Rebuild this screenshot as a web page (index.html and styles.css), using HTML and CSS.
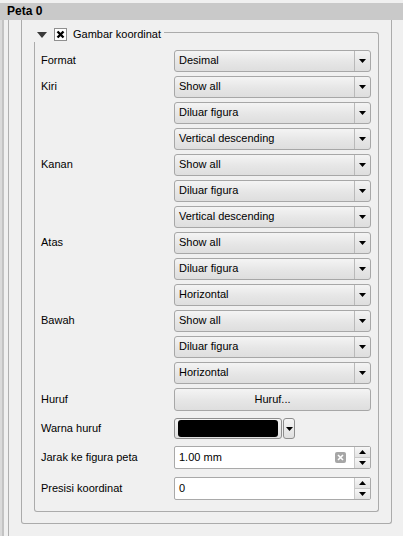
FILE: index.html
```html
<!DOCTYPE html>
<html>
<head>
<meta charset="utf-8">
<link rel="stylesheet" href="styles.css">
</head>
<body>
<div class="page">
  <div class="header">Peta 0</div>
  <div class="scroll">
    <div class="scroll-inner">
      <div class="frame">
        <div class="outer">
          <div class="group">
            <div class="ghead">
              <div class="gtitle">
                <svg class="collapse" width="10" height="6" viewBox="0 0 10 6"><polygon points="0,0 10,0 5,6" fill="#3a3a3a"/></svg>
                <svg class="check" width="13" height="13" viewBox="0 0 13 13"><rect x="0.5" y="0.5" width="12" height="12" fill="#fff" stroke="#8f8f8f"/><path d="M3.5 3.5 L9.5 9.5 M9.5 3.5 L3.5 9.5" stroke="#000" stroke-width="2.4"/></svg>
                <span class="gtext">Gambar koordinat</span>
              </div>
              <div class="gline"></div>
            </div>
            <div class="gbody">
              <div class="row"><span class="label">Format</span><div class="combo"><span class="ctext">Desimal</span><span class="cbtn"><svg width="7" height="4" viewBox="0 0 7 4"><polygon points="0,0 7,0 3.5,4" fill="#000"/></svg></span></div></div>
              <div class="row"><span class="label">Kiri</span><div class="combo"><span class="ctext">Show all</span><span class="cbtn"><svg width="7" height="4" viewBox="0 0 7 4"><polygon points="0,0 7,0 3.5,4" fill="#000"/></svg></span></div></div>
              <div class="row"><span class="label"></span><div class="combo"><span class="ctext">Diluar figura</span><span class="cbtn"><svg width="7" height="4" viewBox="0 0 7 4"><polygon points="0,0 7,0 3.5,4" fill="#000"/></svg></span></div></div>
              <div class="row"><span class="label"></span><div class="combo"><span class="ctext">Vertical descending</span><span class="cbtn"><svg width="7" height="4" viewBox="0 0 7 4"><polygon points="0,0 7,0 3.5,4" fill="#000"/></svg></span></div></div>
              <div class="row"><span class="label">Kanan</span><div class="combo"><span class="ctext">Show all</span><span class="cbtn"><svg width="7" height="4" viewBox="0 0 7 4"><polygon points="0,0 7,0 3.5,4" fill="#000"/></svg></span></div></div>
              <div class="row"><span class="label"></span><div class="combo"><span class="ctext">Diluar figura</span><span class="cbtn"><svg width="7" height="4" viewBox="0 0 7 4"><polygon points="0,0 7,0 3.5,4" fill="#000"/></svg></span></div></div>
              <div class="row"><span class="label"></span><div class="combo"><span class="ctext">Vertical descending</span><span class="cbtn"><svg width="7" height="4" viewBox="0 0 7 4"><polygon points="0,0 7,0 3.5,4" fill="#000"/></svg></span></div></div>
              <div class="row"><span class="label">Atas</span><div class="combo"><span class="ctext">Show all</span><span class="cbtn"><svg width="7" height="4" viewBox="0 0 7 4"><polygon points="0,0 7,0 3.5,4" fill="#000"/></svg></span></div></div>
              <div class="row"><span class="label"></span><div class="combo"><span class="ctext">Diluar figura</span><span class="cbtn"><svg width="7" height="4" viewBox="0 0 7 4"><polygon points="0,0 7,0 3.5,4" fill="#000"/></svg></span></div></div>
              <div class="row"><span class="label"></span><div class="combo"><span class="ctext">Horizontal</span><span class="cbtn"><svg width="7" height="4" viewBox="0 0 7 4"><polygon points="0,0 7,0 3.5,4" fill="#000"/></svg></span></div></div>
              <div class="row"><span class="label">Bawah</span><div class="combo"><span class="ctext">Show all</span><span class="cbtn"><svg width="7" height="4" viewBox="0 0 7 4"><polygon points="0,0 7,0 3.5,4" fill="#000"/></svg></span></div></div>
              <div class="row"><span class="label"></span><div class="combo"><span class="ctext">Diluar figura</span><span class="cbtn"><svg width="7" height="4" viewBox="0 0 7 4"><polygon points="0,0 7,0 3.5,4" fill="#000"/></svg></span></div></div>
              <div class="row"><span class="label"></span><div class="combo"><span class="ctext">Horizontal</span><span class="cbtn"><svg width="7" height="4" viewBox="0 0 7 4"><polygon points="0,0 7,0 3.5,4" fill="#000"/></svg></span></div></div>
              <div class="row row-btn"><span class="label">Huruf</span><div class="button">Huruf...</div></div>
              <div class="row row-color"><span class="label">Warna huruf</span>
                <div class="colorbtn"><div class="swatch"></div></div>
                <div class="colordrop"><svg width="7" height="4" viewBox="0 0 7 4"><polygon points="0,0 7,0 3.5,4" fill="#000"/></svg></div>
              </div>
              <div class="row row-spin"><span class="label">Jarak ke figura peta</span>
                <div class="spin"><span class="stext">1.00 mm</span>
                  <svg class="clear" width="11" height="11" viewBox="0 0 11 11"><rect x="0" y="0" width="11" height="11" rx="2" fill="#a6a6a6"/><path d="M3 3 L8 8 M8 3 L3 8" stroke="#fff" stroke-width="1.6"/></svg>
                  <span class="sbtns"><span class="sb"><svg width="7" height="4" viewBox="0 0 7 4"><polygon points="0,4 7,4 3.5,0" fill="#000"/></svg></span><span class="sb"><svg width="7" height="4" viewBox="0 0 7 4"><polygon points="0,0 7,0 3.5,4" fill="#000"/></svg></span></span>
                </div>
              </div>
              <div class="row row-spin last"><span class="label">Presisi koordinat</span>
                <div class="spin"><span class="stext">0</span>
                  <span class="sbtns"><span class="sb"><svg width="7" height="4" viewBox="0 0 7 4"><polygon points="0,4 7,4 3.5,0" fill="#000"/></svg></span><span class="sb"><svg width="7" height="4" viewBox="0 0 7 4"><polygon points="0,0 7,0 3.5,4" fill="#000"/></svg></span></span>
                </div>
              </div>
            </div>
          </div>
        </div>
      </div>
    </div>
  </div>
</div>
</body>
</html>
```

FILE: styles.css
```css
html, body {
  margin: 0;
  padding: 0;
  background: #f0f0f0;
}
body {
  font-family: "Liberation Sans", Arial, sans-serif;
  font-size: 11px;
  color: #000;
}
.page {
  width: 403px;
  height: 536px;
  box-sizing: border-box;
  padding-top: 3px;
  display: flex;
  flex-direction: column;
  overflow: hidden;
}
.header {
  flex: none;
  height: 17px;
  line-height: 17px;
  background: #c9c9c9;
  font-weight: bold;
  font-size: 12px;
  padding-left: 7px;
}
.scroll {
  flex: 1;
  display: flex;
  border-left: 2px solid #dadada;
}
.scroll-inner {
  flex: 1;
  display: flex;
  border-left: 2px solid #c3c3c3;
  padding-left: 4px;
}
.frame {
  flex: 1;
  display: flex;
  align-items: flex-start;
  border-left: 1px solid #b0b0b0;
  padding-left: 12px;
}
.outer {
  width: 371px;
  box-sizing: border-box;
  border: 1px solid #ababab;
  border-top: none;
  border-radius: 0 0 3px 3px;
  padding: 0 12px 11px 12px;
}
.ghead {
  display: flex;
  height: 22px;
}
.gtitle {
  display: flex;
  align-items: center;
  padding: 8px 3px 1px 3px;
}
.collapse {
  margin-right: 7px;
}
.check {
  margin-right: 6px;
}
.gtext {
  line-height: 13px;
}
.gline {
  flex: 1;
  margin-top: 12px;
  border-top: 1px solid #ababab;
  border-right: 1px solid #ababab;
  border-top-right-radius: 3px;
}
.gbody {
  border: 1px solid #ababab;
  border-top: none;
  border-radius: 0 0 3px 3px;
  padding: 8px 7px 11px 6px;
}
.row {
  display: flex;
  align-items: center;
  height: 22px;
  margin-top: 4px;
}
.row:first-child {
  margin-top: 0;
}
.row-btn {
  height: 23px;
}
.row-color {
  height: 27px;
}
.row-spin {
  height: 23px;
}
.row-spin.last {
  margin-top: 8px;
}
.label {
  width: 133px;
  flex: none;
  padding-bottom: 2px;
}
.combo {
  width: 197px;
  height: 22px;
  box-sizing: border-box;
  border: 1px solid #a7a7a7;
  border-radius: 3px;
  background: linear-gradient(#f4f4f4, #e6e6e6 55%, #dedede);
  display: flex;
}
.ctext {
  flex: 1;
  padding-left: 4px;
  line-height: 19px;
}
.cbtn {
  width: 16px;
  box-sizing: border-box;
  border-left: 1px solid #b9b9b9;
  display: flex;
  align-items: center;
  justify-content: center;
}
.button {
  width: 197px;
  height: 23px;
  box-sizing: border-box;
  border: 1px solid #a7a7a7;
  border-radius: 3px;
  background: linear-gradient(#f4f4f4, #e6e6e6 55%, #dedede);
  text-align: center;
  line-height: 20px;
}
.colorbtn {
  width: 108px;
  height: 21px;
  box-sizing: border-box;
  border: 1px solid #8e8e8e;
  border-radius: 3px;
  background: linear-gradient(#f5f5f5, #e0e0e0);
  padding: 1px 3px;
  display: flex;
}
.swatch {
  flex: 1;
  background: #000;
  border-radius: 3px;
}
.colordrop {
  width: 12px;
  height: 21px;
  box-sizing: border-box;
  margin-left: 1px;
  border: 1px solid #8e8e8e;
  border-radius: 3px;
  background: linear-gradient(#f5f5f5, #e0e0e0);
  display: flex;
  align-items: center;
  justify-content: center;
}
.spin {
  width: 197px;
  height: 23px;
  box-sizing: border-box;
  border: 1px solid #a9a9a9;
  border-radius: 2px;
  background: #fff;
  display: flex;
  align-items: center;
}
.stext {
  flex: 1;
  padding-left: 4px;
  padding-bottom: 1px;
}
.clear {
  margin-right: 8px;
}
.sbtns {
  align-self: stretch;
  width: 16px;
  display: flex;
  flex-direction: column;
  border-left: 1px solid #c8c8c8;
  box-sizing: border-box;
}
.sb {
  flex: 1;
  display: flex;
  align-items: center;
  justify-content: center;
  background: linear-gradient(#f7f7f7, #e3e3e3);
}
.sb + .sb {
  border-top: 1px solid #c8c8c8;
}
```
